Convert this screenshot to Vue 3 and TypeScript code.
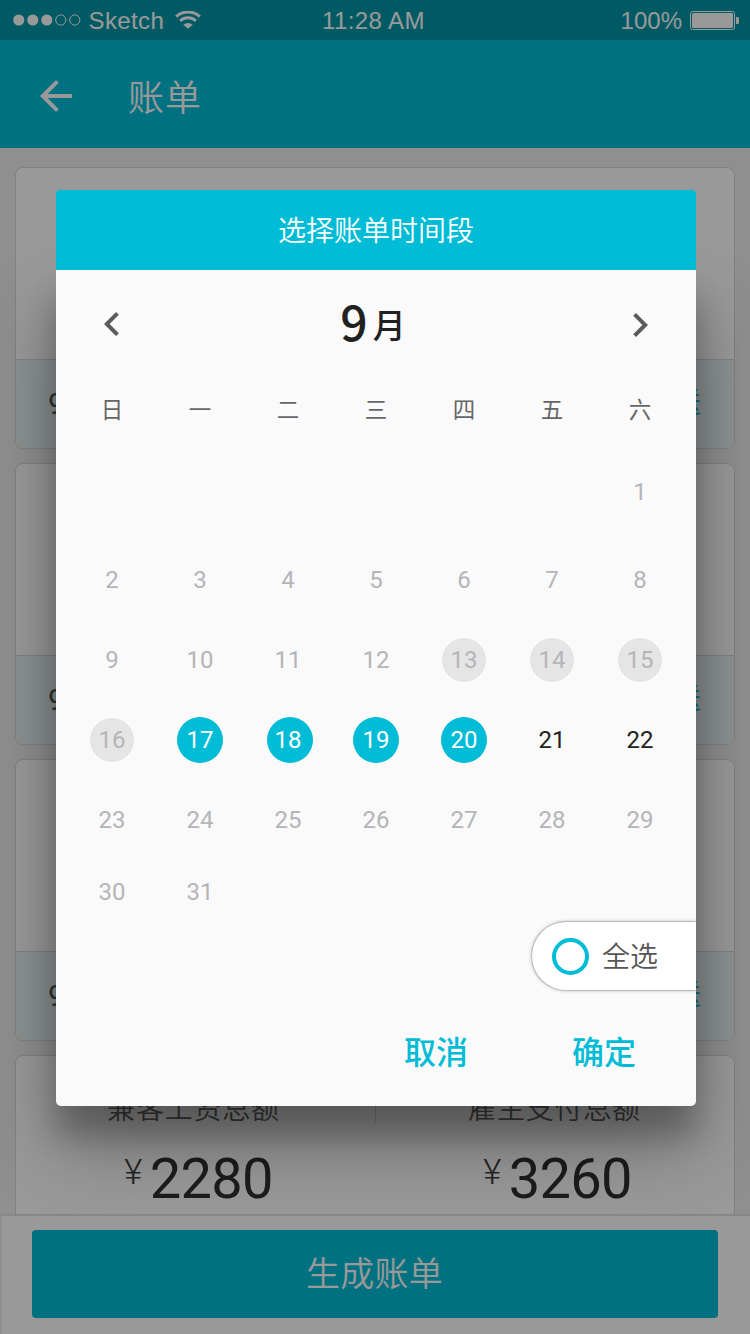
<script setup lang="ts">
type DayState = 'muted' | 'past' | 'selected' | 'open'

interface Day {
  label: string
  state: DayState
}

const weekdays: string[] = ['日', '一', '二', '三', '四', '五', '六']
const leadingBlanks = 6

function stateOf(day: number): DayState {
  if (day >= 13 && day <= 16) return 'past'
  if (day >= 17 && day <= 20) return 'selected'
  if (day === 21 || day === 22) return 'open'
  return 'muted'
}

const days: Day[] = [
  ...Array.from({ length: leadingBlanks }, (): Day => ({ label: '', state: 'muted' })),
  ...Array.from({ length: 31 }, (_, i): Day => ({ label: String(i + 1), state: stateOf(i + 1) })),
]

const bills: number[] = [1, 2, 3]
const totals = [
  { name: '兼客工资总额', amount: '2280' },
  { name: '雇主支付总额', amount: '3260' },
]
</script>

<template>
  <div class="screen">
    <div class="status">
      <div class="status-left">
        <svg class="signal" width="68" height="12" viewBox="0 0 68 12">
          <circle cx="5.8" cy="6" r="5.6" fill="#fff" />
          <circle cx="19.8" cy="6" r="5.6" fill="#fff" />
          <circle cx="33.8" cy="6" r="5.6" fill="#fff" />
          <circle cx="47.8" cy="6" r="5.1" fill="none" stroke="#fff" />
          <circle cx="61.8" cy="6" r="5.1" fill="none" stroke="#fff" />
        </svg>
        <span class="carrier">Sketch</span>
        <svg class="wifi" width="26" height="18" viewBox="0 0 26 18">
          <path d="M1.2 5.6 A17.5 17.5 0 0 1 24.8 5.6" fill="none" stroke="#fff" stroke-width="3.2" />
          <path d="M5 9.9 A11.8 11.8 0 0 1 21 9.9" fill="none" stroke="#fff" stroke-width="2.8" />
          <path d="M13 17.8 L8.3 13.7 A7 7 0 0 1 17.7 13.7 Z" fill="#fff" />
        </svg>
      </div>
      <span class="time">11:28 AM</span>
      <div class="status-right">
        <span>100%</span>
        <svg class="battery" width="50" height="20" viewBox="0 0 50 20">
          <rect x=".5" y=".5" width="44" height="18" rx="2" fill="none" stroke="#fff" />
          <rect x="2" y="2" width="41" height="15" rx="1" fill="#fff" />
          <path d="M46 6h1.5q1.5 0 1.5 1.5v4q0 1.5-1.5 1.5h-1.5z" fill="#fff" />
        </svg>
      </div>
    </div>

    <header class="nav">
      <svg width="48" height="48" viewBox="0 0 24 24">
        <path d="M20 11H7.83l5.59-5.59L12 4l-8 8 8 8 1.41-1.41L7.83 13H20v-2z" fill="#fff" />
      </svg>
      <h1>账单</h1>
    </header>

    <main class="list">
      <section v-for="bill in bills" :key="bill" class="card">
        <div class="card-foot">
          <span class="period">9月</span>
          <span class="send">送</span>
        </div>
      </section>
      <section class="card totals">
        <div v-for="total in totals" :key="total.name" class="total">
          <div class="total-name">{{ total.name }}</div>
          <div class="total-amount"><span class="yen">¥</span>{{ total.amount }}</div>
        </div>
      </section>
    </main>

    <footer class="bottom">
      <button class="generate">生成账单</button>
    </footer>

    <div class="overlay">
      <div class="dialog">
        <div class="dialog-title">选择账单时间段</div>
        <div class="dialog-body">
          <div class="month">
            <svg class="prev" width="48" height="48" viewBox="0 0 24 24">
              <path d="M15.41 7.41L14 6l-6 6 6 6 1.41-1.41L10.83 12z" fill="#5b5b5b" />
            </svg>
            <div class="month-name"><span class="month-number">9</span><span class="month-unit">月</span></div>
            <svg class="next" width="48" height="48" viewBox="0 0 24 24">
              <path d="M10 6L8.59 7.41 13.17 12l-4.58 4.59L10 18l6-6z" fill="#5b5b5b" />
            </svg>
          </div>
          <div class="weekdays">
            <span v-for="name in weekdays" :key="name">{{ name }}</span>
          </div>
          <div class="days">
            <div v-for="(day, i) in days" :key="i" class="day" :class="[day.state, { nudge: day.label === '18' }]">
              <span>{{ day.label }}</span>
            </div>
          </div>
          <div class="select-all-row">
            <div class="select-all">
              <span class="ring"></span>
              <span class="select-label">全选</span>
            </div>
          </div>
          <div class="actions">
            <span>取消</span>
            <span>确定</span>
          </div>
        </div>
      </div>
    </div>
  </div>
</template>

<style>
body {
  margin: 0;
}
</style>

<style scoped>
.screen {
  position: relative;
  width: 750px;
  height: 1334px;
  overflow: hidden;
  display: flex;
  flex-direction: column;
  background: #efefef;
  font-family: Roboto, "Noto Sans CJK SC", sans-serif;
}
.status {
  height: 40px;
  flex: none;
  display: grid;
  grid-template-columns: 1fr auto 1fr;
  align-items: center;
  background: #0097a7;
  color: #fff;
  font: 24px/40px "Liberation Sans", sans-serif;
}
.status span {
  padding-top: 2px;
  line-height: 38px;
}
.status-left {
  display: flex;
  align-items: center;
  padding-left: 12.5px;
}
.carrier {
  margin-left: 8px;
  letter-spacing: 0.4px;
}
.wifi {
  margin-left: 11px;
  margin-top: -1px;
}
.time {
  margin-right: 3px;
  letter-spacing: 0.4px;
}
.status-right {
  display: flex;
  align-items: center;
  justify-content: flex-end;
  padding-right: 10px;
}
.battery {
  margin-left: 8px;
  margin-top: 2px;
}
.nav {
  height: 108px;
  flex: none;
  display: flex;
  align-items: center;
  box-sizing: border-box;
  padding: 4px 32px 0;
  background: #00bcd7;
  color: #fff;
}
.nav h1 {
  margin: 5px 0 0 48px;
  font-size: 36px;
  line-height: 48px;
  font-weight: 350;
  letter-spacing: 1px;
}
.list {
  flex: 1;
  min-height: 0;
  overflow: hidden;
  padding: 19px 15px 0;
  display: flex;
  flex-direction: column;
  gap: 14px;
}
.card {
  flex: none;
  height: 282px;
  box-sizing: border-box;
  border: 1px solid #d8d8d8;
  border-radius: 8px;
  overflow: hidden;
  background: #fff;
  display: flex;
  flex-direction: column;
  justify-content: flex-end;
}
.card-foot {
  height: 88px;
  border-top: 1px solid #d8d8d8;
  background: #eaf4f4;
  padding: 0 33px 0 32px;
  display: flex;
  justify-content: space-between;
  align-items: center;
  font-size: 28px;
  font-weight: 350;
  line-height: 92px;
  color: #555;
}
.period {
  font-size: 30px;
  font-weight: 400;
}
.send {
  color: #00bcd7;
}
.totals {
  display: grid;
  grid-template-columns: 1fr 1fr;
  justify-content: stretch;
  align-content: start;
  padding-top: 32px;
  background: #fff linear-gradient(#d8d8d8, #d8d8d8) 359px 32px / 1px 34px no-repeat;
}
.total {
  text-align: center;
}
.total:first-child .total-name {
  margin-right: 4px;
}
.total-name {
  font-size: 28px;
  font-weight: 350;
  line-height: 44px;
  letter-spacing: 0.8px;
  color: #666;
}
.total-amount {
  display: flex;
  justify-content: center;
  font-size: 56px;
  line-height: 66px;
  margin-top: 14px;
  margin-left: 6px;
  letter-spacing: -0.7px;
  font-family: "Roboto Slab", Roboto, sans-serif;
  color: #303030;
}
.yen {
  font-size: 35px;
  line-height: 53px;
  margin-right: 8px;
  font-family: Roboto, sans-serif;
  font-weight: 350;
  color: #404040;
}
.bottom {
  flex: none;
  height: 120px;
  box-sizing: border-box;
  border-top: 2px solid #e1e1e1;
  border-left: 2px solid #efefef;
  background: #fff;
  padding: 14px 32px 16px 30px;
}
.generate {
  display: block;
  width: 100%;
  height: 88px;
  border: 0;
  padding: 0 1px 0 0;
  border-radius: 4px;
  background: #00bcd7;
  color: #fff;
  font: 350 34px/88px Roboto, "Noto Sans CJK SC", sans-serif;
  letter-spacing: 0.3px;
}
.overlay {
  position: absolute;
  inset: 0;
  display: flex;
  align-items: flex-start;
  padding: 190px 54px 0 56px;
  background: rgba(0, 0, 0, 0.4);
}
.dialog {
  width: 640px;
}
.dialog-title {
  position: relative;
  z-index: 1;
  height: 80px;
  border-radius: 4px 4px 0 0;
  background: #00bcd7;
  color: #fff;
  font-size: 28px;
  font-weight: 350;
  line-height: 84px;
  text-align: center;
}
.dialog-body {
  height: 836px;
  border-radius: 0 0 5px 5px;
  background: #fafafa;
  box-shadow: 0 38px 76px rgba(0, 0, 0, 0.3), 0 30px 30px rgba(0, 0, 0, 0.22);
}
.month {
  height: 108px;
  display: flex;
  align-items: center;
  justify-content: space-between;
  padding: 0 32px;
}
.prev {
  margin-top: -1px;
}
.next {
  margin-top: 1px;
}
.month-name {
  color: #212121;
  font-family: "Noto Sans CJK SC", sans-serif;
  font-weight: 500;
  line-height: 60px;
  margin-top: 6px;
  margin-right: 6px;
}
.month-number {
  font-size: 48px;
}
.month-unit {
  font-size: 33px;
  margin-left: 5px;
  vertical-align: 3px;
}
.weekdays {
  height: 70px;
  display: grid;
  grid-template-columns: repeat(7, 88px);
  padding-left: 12px;
  color: #666;
  font-size: 22.5px;
  line-height: 65px;
  text-align: center;
}
.days {
  display: grid;
  grid-template-columns: repeat(7, 88px);
  grid-template-rows: 88px 88px 72px 88px 72px 72px;
  padding-left: 12px;
  font-size: 24px;
}
.day {
  display: flex;
  align-items: center;
  justify-content: center;
  color: #b4b5b8;
}
.day span {
  width: 44px;
  height: 44px;
  line-height: 44px;
  border-radius: 50%;
  text-align: center;
}
.day.past span {
  background: #e5e5e5;
}
.day.selected span {
  width: 46px;
  height: 46px;
  line-height: 46px;
  background: #00bcd7;
  color: #fff;
}
.day.nudge span {
  box-sizing: border-box;
  margin-left: 4px;
  padding-right: 4px;
}
.day.open {
  color: #212121;
}
.select-all-row {
  display: flex;
  justify-content: flex-end;
  overflow: hidden;
  margin-top: -11px;
  padding: 5px 0;
}
.select-all {
  width: 164px;
  height: 68px;
  display: flex;
  align-items: center;
  box-sizing: border-box;
  padding-left: 20px;
  border-radius: 34px 0 0 34px;
  background: #fff;
  box-shadow: 0 0 1px 1px rgba(0, 0, 0, 0.16), 0 0 4px rgba(0, 0, 0, 0.3);
}
.ring {
  box-sizing: border-box;
  width: 37px;
  height: 37px;
  border: 4px solid #00bcd7;
  border-radius: 50%;
}
.select-label {
  margin-left: 13px;
  margin-bottom: 2px;
  font-size: 28px;
  font-weight: 350;
  color: #555;
}
.actions {
  display: flex;
  justify-content: flex-end;
  gap: 104px;
  padding: 34px 60px 0 0;
  color: #00bcd7;
  font-size: 32px;
  line-height: 48px;
  font-weight: 500;
}
</style>
